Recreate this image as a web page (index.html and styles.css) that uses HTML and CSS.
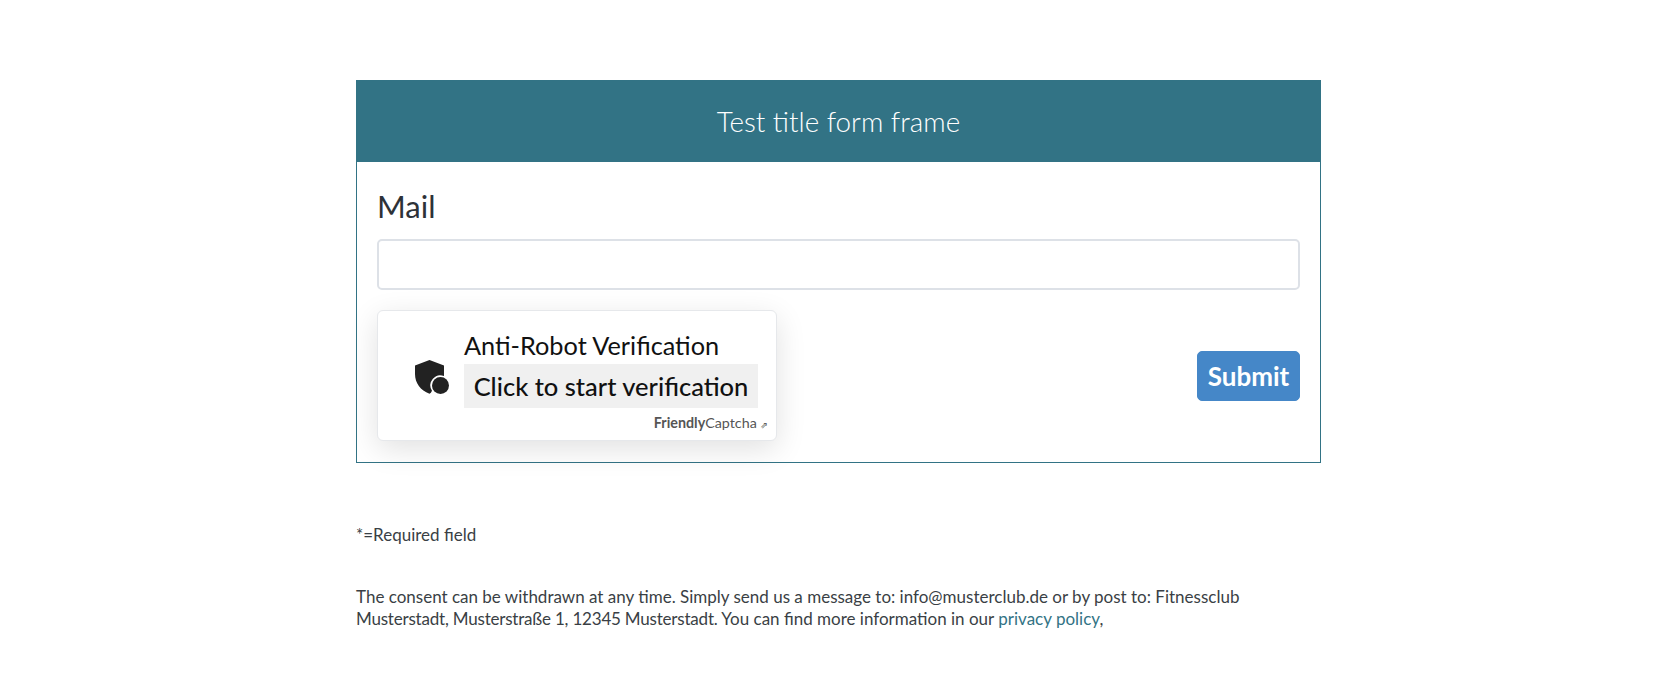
FILE: index.html
```html
<!DOCTYPE html>
<html lang="en">
<head>
  <meta charset="UTF-8" />
  <title>Test title form frame</title>
  <link rel="stylesheet" href="styles.css">
</head>
<body>
  <div class="page">
    <form class="form-frame">
      <div class="form-title">Test title form frame</div>
      <div class="form-body">
        <label class="field-label" for="mail">Mail</label>
        <input class="field-input" id="mail" type="text">
        <div class="form-bottom">
          <div class="captcha">
            <svg class="captcha-icon" viewBox="0 0 34 34">
              <path d="M14.5 0 L29 5.5 V16.1 A10 10 0 0 0 17 30.8 Q16 33.2 14.5 33.8 C5.5 30.5 0 23 0 14 V5.5 Z" fill="#222"/>
              <circle cx="25.5" cy="25.5" r="8.5" fill="#222"/>
            </svg>
            <div class="captcha-content">
              <div class="captcha-text">Anti-Robot Verification</div>
              <button class="captcha-start" type="button">Click to start verification</button>
            </div>
            <div class="captcha-banner"><b>Friendly</b>Captcha <span class="captcha-arrow">⇗</span></div>
          </div>
          <button class="submit-button" type="button">Submit</button>
        </div>
      </div>
    </form>
    <p class="required-note">*=Required field</p>
    <p class="consent">The consent can be withdrawn at any time. Simply send us a message to: info@musterclub.de or by post to: Fitnessclub <span class="address">Musterstadt, Musterstraße 1, 12345 Musterstadt.</span> You can find more information in our <a href="#">privacy policy</a>,</p>
  </div>
</body>
</html>
```

FILE: styles.css
```css
body {
  margin: 0;
  background: #fff;
  color: #3a3f45;
  font-family: "Lato", "Noto Sans", sans-serif;
}
.page {
  width: 965px;
  margin: 80px 0 0 356px;
}
.form-frame {
  display: block;
  border: 1px solid #327385;
}
.form-title {
  height: 81px;
  line-height: 81px;
  background: #327385;
  color: #fff;
  text-align: center;
  font-size: 27.8px;
  font-weight: 300;
}
.form-body {
  padding: 22px 20px 21px 20px;
}
.field-label {
  display: block;
  height: 44px;
  line-height: 44px;
  font-size: 31px;
  color: #2d3238;
  margin-bottom: 11px;
}
.field-input {
  display: block;
  box-sizing: border-box;
  width: 100%;
  height: 51px;
  border: 2px solid #dde1e7;
  border-radius: 5px;
  background: #fff;
}
.form-bottom {
  display: flex;
  justify-content: space-between;
  align-items: center;
  margin-top: 20px;
}
.captcha {
  position: relative;
  box-sizing: border-box;
  width: 400px;
  height: 131px;
  display: flex;
  align-items: flex-start;
  padding: 21px 19px 0 37px;
  border: 1px solid #e6e8eb;
  border-radius: 6px;
  background: #fff;
  color: #111;
  box-shadow: 0 8px 30px rgba(0, 0, 0, 0.12);
}
.captcha-icon {
  width: 34px;
  height: 34px;
  margin: 28px 15px 0 0;
  flex-shrink: 0;
}
.captcha-text {
  height: 32px;
  line-height: 26px;
  font-size: 25.3px;
}
.captcha-start {
  display: block;
  width: 294px;
  height: 44px;
  padding: 0;
  border: none;
  background: #f0f0f0;
  color: #111;
  font-family: inherit;
  font-size: 25.5px;
  font-weight: 500;
  text-align: center;
}
.captcha-banner {
  position: absolute;
  right: 8px;
  bottom: 9px;
  font-size: 14.3px;
  color: #555;
}
.captcha-banner b {
  font-weight: 700;
}
.captcha-arrow {
  font-family: "DejaVu Sans", sans-serif;
  font-size: 9px;
}
.submit-button {
  width: 103px;
  height: 50px;
  padding: 0;
  border: 1px solid #4587c8;
  border-radius: 5px;
  background: #4587c8;
  color: #fff;
  font-family: inherit;
  font-size: 26px;
  font-weight: 700;
}
.required-note {
  margin: 61px 0 0 0;
  font-size: 17px;
  line-height: 22px;
}
.consent {
  margin: 40px 0 0 0;
  font-size: 17px;
  line-height: 21.5px;
}
.address {
  letter-spacing: -0.2px;
}
.consent a {
  color: #327385;
  text-decoration: none;
}
```
